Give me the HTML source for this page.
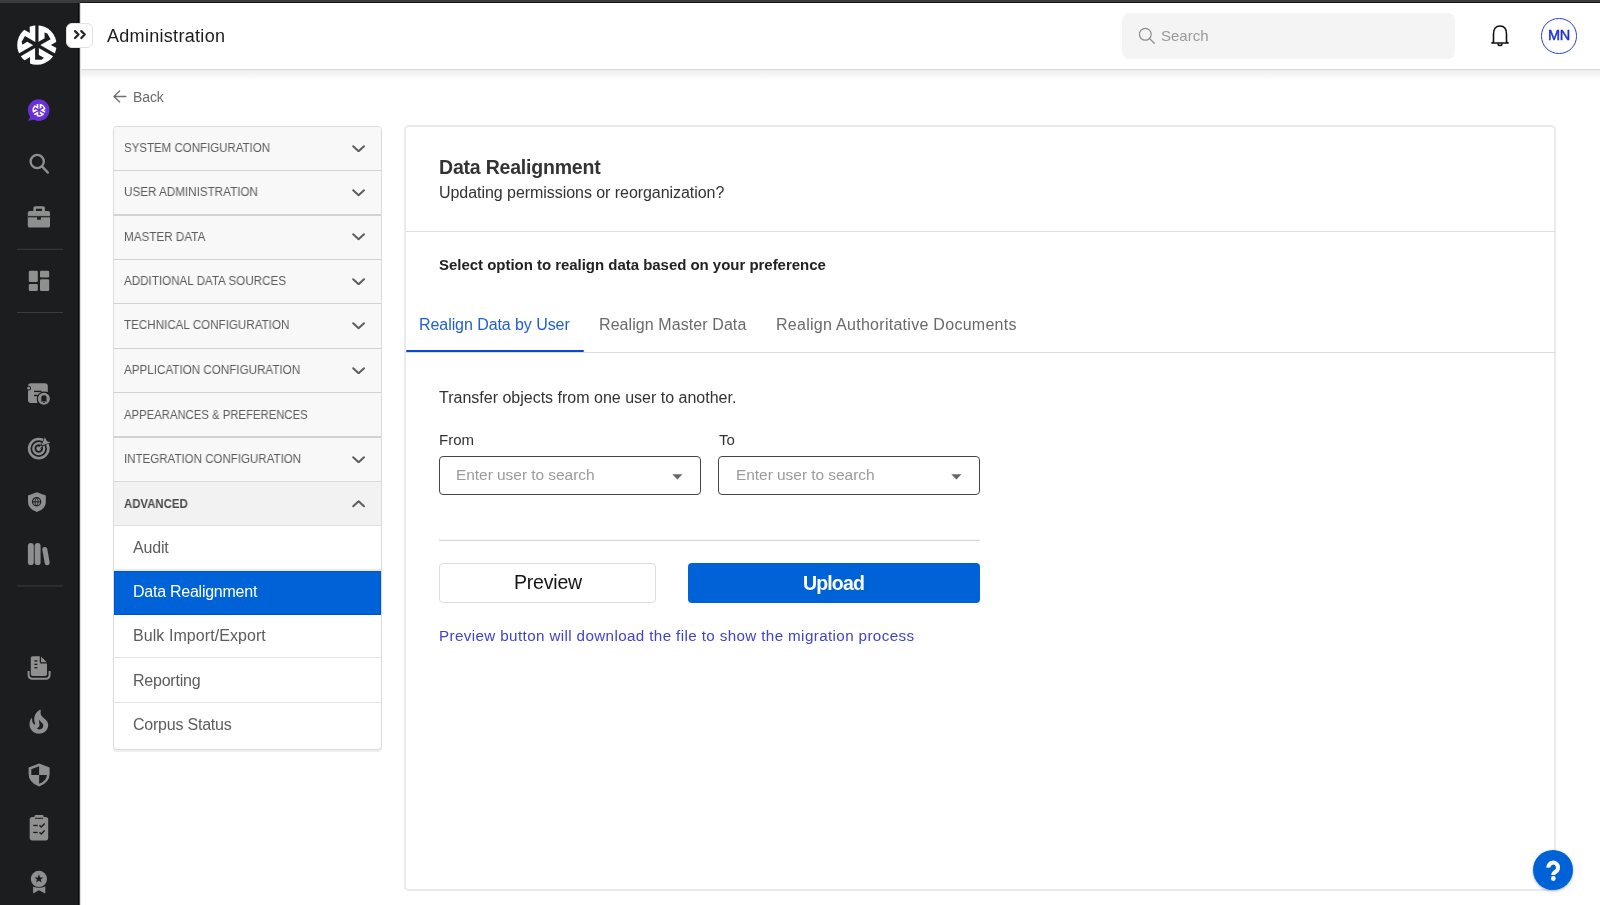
<!DOCTYPE html>
<html><head><meta charset="utf-8">
<style>
*{margin:0;padding:0;box-sizing:border-box}
html,body{width:1600px;height:905px;overflow:hidden;background:#fff;font-family:"Liberation Sans",sans-serif;position:relative}
.a{position:absolute}
.t{position:absolute;white-space:nowrap;line-height:1;will-change:transform}
#topstrip{left:0;top:0;width:1600px;height:3px;background:#3c3c3c}
#topstrip2{left:80px;top:2px;width:1520px;height:1px;background:#161816}
#side{left:0;top:3px;width:80px;height:902px;background:#1c1d1f}
#sideline{left:78px;top:3px;width:1px;height:902px;background:#05080a}
#sideedge{left:79px;top:3px;width:2px;height:902px;background:linear-gradient(to right,#4a4b4c 50%,#dedede 50%)}
#header{left:80px;top:3px;width:1520px;height:67px;background:#fff;border-bottom:1px solid #d9d9d9}
#hshadow{left:80px;top:70px;width:1520px;height:10px;background:linear-gradient(#eeeeee,#fff)}
/* card */
#card{left:404px;top:125px;width:1151.5px;height:766px;border:2px solid #eaeaea;border-radius:5px;background:#fff}
</style></head><body>
<div id="topstrip" class="a"></div>
<div id="side" class="a"></div>
<div id="sideline" class="a"></div>
<div id="topstrip2" class="a"></div>
<div id="header" class="a"></div>
<div id="hshadow" class="a"></div>
<div id="sideedge" class="a"></div>

<!-- header content -->
<div class="t" style="left:107px;top:26.8px;font-size:18px;letter-spacing:0.3px;color:#1b1b1b">Administration</div>
<div class="a" style="left:1122px;top:12.5px;width:333px;height:46.5px;background:#f4f4f4;border-radius:7px"></div>
<svg class="a" style="left:1136px;top:26px" width="22" height="22" viewBox="0 0 22 22"><circle cx="9.3" cy="8.3" r="5.9" fill="none" stroke="#8c8c8c" stroke-width="1.2"/><line x1="13.6" y1="12.6" x2="18.3" y2="17.3" stroke="#8c8c8c" stroke-width="1.3" stroke-linecap="round"/></svg>
<div class="t" style="left:1161px;top:28.3px;font-size:15px;color:#9a9a9a">Search</div>
<svg class="a" style="left:1488px;top:22px" width="24" height="26" viewBox="0 0 24 26"><path d="M5.5 19.8 L5.5 12 C5.5 6.8 8 4 12 4 C16 4 18.5 6.8 18.5 12 L18.5 19.8 C18.5 20.3 19 20.4 19.8 20.8 L20.1 21 L3.9 21 L4.2 20.8 C5 20.4 5.5 20.3 5.5 19.8 Z" fill="none" stroke="#111" stroke-width="1.6" stroke-linejoin="round"/><path d="M10 21.4 C10 24.2 14 24.2 14 21.4" fill="none" stroke="#111" stroke-width="1.5"/></svg>
<div class="a" style="left:1541px;top:18px;width:35.5px;height:35.5px;border:1.6px solid #2a3ce6;border-radius:50%"></div>
<div class="t" style="left:1547.6px;top:28.4px;font-size:14.5px;color:#1b2fd8;letter-spacing:-0.35px;-webkit-text-stroke:0.45px #1b2fd8">MN</div>

<!-- expand button -->
<div class="a" style="left:66px;top:23px;width:26.5px;height:24.5px;background:#fff;border:1px solid #e2e2e2;border-radius:6px"></div>
<svg class="a" style="left:72px;top:28px" width="16" height="14" viewBox="0 0 16 14"><path d="M3.05 3.15 L6.5 6.55 L3.05 9.95 M9.3 3.15 L12.75 6.55 L9.3 9.95" fill="none" stroke="#262626" stroke-width="2.3" stroke-linecap="round" stroke-linejoin="round"/></svg>

<!-- back -->
<svg class="a" style="left:111px;top:88px" width="18" height="17" viewBox="0 0 18 17"><path d="M8.6 2.9 L2.9 8.5 L8.6 14.1 M2.9 8.5 L14.8 8.5" fill="none" stroke="#707070" stroke-width="1.35" stroke-linecap="round" stroke-linejoin="round"/></svg>
<div class="t" style="left:132.8px;top:90.1px;font-size:14px;color:#6b6b6b;letter-spacing:-0.1px">Back</div>

<!-- SIDEBAR_PLACEHOLDER -->
<svg class="a" style="left:0;top:0" width="80" height="905" viewBox="0 0 80 905">
<defs>
<g id="lg">
 <circle cx="0" cy="0" r="19.7" fill="#fff"/>
 <g fill="#1c1d1f">
 <g id="piece">
  <rect x="-1.6" y="-21" width="3.2" height="21"/>
  <path d="M-1.8 0 L1.95 0 L1.95 10.1 L7.0 12.8 L4.8 14.8 L-1.8 14.8 Z"/>
  <path d="M-6.9 12.1 L-6.9 19.2 L-9.8 18.4 L-12.9 15.8 Z"/>
 </g>
 <use href="#piece" transform="rotate(120)"/>
 <use href="#piece" transform="rotate(-120)"/>
 <circle cx="0" cy="0" r="2.6"/>
 </g>
</g>
</defs>
<use href="#lg" transform="translate(36.9 45)"/>
<!-- purple bubble -->
<circle cx="38.7" cy="110.1" r="10.8" fill="#6a2fd6"/>
<path d="M31 115 L28 121 L36 119 Z" fill="#6a2fd6"/>
<g transform="translate(39 110.2) scale(0.33)">
 <circle cx="0" cy="0" r="19.7" fill="#fff"/>
 <g fill="#6a2fd6">
 <g id="piece2">
  <rect x="-2" y="-21" width="4" height="21"/>
  <path d="M-2.2 0 L2.4 0 L2.4 10.1 L7.4 12.8 L5.2 15.2 L-2.2 15.2 Z"/>
  <path d="M-6.9 12.1 L-6.9 19.2 L-9.8 18.4 L-12.9 15.8 Z"/>
 </g>
 <use href="#piece2" transform="rotate(120)"/>
 <use href="#piece2" transform="rotate(-120)"/>
 </g>
</g>
<g fill="#8f8f8f" stroke="none">
<!-- search -->
<circle cx="37.2" cy="161.5" r="6.6" fill="none" stroke="#8f8f8f" stroke-width="2.3"/>
<line x1="42.2" y1="166.6" x2="47.9" y2="172.6" stroke="#8f8f8f" stroke-width="2.3" stroke-linecap="round"/>
<!-- briefcase -->
<path d="M35.2 206.3 L43.1 206.3 Q44.9 206.3 44.9 208.1 L44.9 211.5 L42 211.5 L42 208.8 L35.9 208.8 L35.9 211.5 L33.4 211.5 L33.4 208.1 Q33.4 206.3 35.2 206.3 Z"/>
<rect x="27.8" y="211" width="22.2" height="16.6" rx="1.9"/>
<rect x="27.8" y="215.9" width="22.2" height="1.5" fill="#2f3032"/>
<rect x="37.1" y="217.1" width="3.8" height="2.6" fill="#1c1d1f"/>
<!-- dashboard -->
<rect x="28.8" y="270.7" width="9" height="11.3" rx="1.3"/>
<rect x="28.8" y="283.9" width="9" height="7.1" rx="1.3"/>
<rect x="40" y="270.7" width="9.2" height="6.9" rx="1.3"/>
<rect x="40" y="279.3" width="9.2" height="11.7" rx="1.3"/>
<!-- doc with bell -->
<path d="M31 383.2 L44.8 383.2 Q47.8 383.2 47.8 386.2 L47.8 392 Q43 391 39.5 394.5 Q36.8 398 37.6 403.1 L31 403.1 Q28 403.1 28 400.1 L28 386.2 Q28 383.2 31 383.2 Z"/>
<circle cx="28.6" cy="388.2" r="2.4" fill="#1c1d1f"/>
<circle cx="28.6" cy="388.2" r="1.4" fill="#8f8f8f"/>
<rect x="34" y="390.7" width="7.6" height="1.4" fill="#1c1d1f"/>
<rect x="34" y="394.8" width="4" height="1.4" fill="#1c1d1f"/>
<circle cx="43.9" cy="398.8" r="7.2" fill="#1c1d1f"/>
<circle cx="43.9" cy="398.8" r="6"/>
<path d="M41.3 400.8 L41.3 397.6 Q41.3 395.2 43.9 395.2 Q46.5 395.2 46.5 397.6 L46.5 400.8 L47.2 401.4 L40.6 401.4 Z" fill="#1c1d1f"/>
<rect x="43.1" y="402" width="1.6" height="1" fill="#1c1d1f"/>
<!-- target -->
<circle cx="38.75" cy="448.6" r="9.6" fill="none" stroke="#8f8f8f" stroke-width="2.6"/>
<circle cx="38.75" cy="448.6" r="5.4" fill="none" stroke="#8f8f8f" stroke-width="2.3"/>
<circle cx="38.75" cy="448.6" r="2.4"/>
<line x1="39.5" y1="447.8" x2="46" y2="441.3" stroke="#1c1d1f" stroke-width="3"/>
<line x1="38.75" y1="448.6" x2="44.5" y2="442.8" stroke="#8f8f8f" stroke-width="1.5"/>
<path d="M41.6 445.6 L44.9 437.2 L46.7 441.1 L50.5 442.4 Z" stroke="#1c1d1f" stroke-width="1.2" stroke-linejoin="round"/>
<path d="M41.6 445.6 L44.9 437.2 L46.7 441.1 L50.5 442.4 Z"/>
<!-- shield globe -->
<path d="M36.9 492.2 L45.8 495.6 L45.8 502 Q45.8 509 36.9 512.1 Q28 509 28 502 L28 495.6 Z"/>
<circle cx="36.6" cy="501.8" r="4.7" fill="#1c1d1f"/>
<circle cx="36.6" cy="501.8" r="3.5" fill="#8f8f8f"/>
<ellipse cx="36.6" cy="501.8" rx="1.5" ry="3.6" fill="none" stroke="#1c1d1f" stroke-width="0.9"/>
<rect x="32.4" y="501.3" width="8.4" height="1" fill="#1c1d1f"/>
<!-- library -->
<rect x="27.9" y="542.9" width="5.9" height="22.2" rx="2.95"/>
<rect x="34.7" y="542.9" width="5.9" height="22.2" rx="2.95"/>
<rect x="43.5" y="546.9" width="5" height="18.4" rx="2.5" transform="rotate(-10 46 556.1)"/>
<!-- doc tray -->
<path d="M32.8 656.2 L40.6 656.2 L47 662.6 L47 673.9 Q47 675.9 45 675.9 L32.8 675.9 Q30.8 675.9 30.8 673.9 L30.8 658.2 Q30.8 656.2 32.8 656.2 Z"/>
<path d="M40.4 656 L40.4 662 Q40.4 662.9 41.3 662.9 L47.3 662.9" fill="none" stroke="#1c1d1f" stroke-width="1.3"/>
<path d="M41.6 657.4 L41.6 661.7 L45.9 661.7 Z"/>
<rect x="34.4" y="660.3" width="3" height="1.3" fill="#1c1d1f"/>
<rect x="34.4" y="663.7" width="3" height="1.3" fill="#1c1d1f"/>
<rect x="34.4" y="667.1" width="3" height="1.3" fill="#1c1d1f"/>
<path d="M28.6 671 L28.6 674.7 Q28.6 678.7 32.6 678.7 L45.6 678.7 Q49.6 678.7 49.6 674.7 L49.6 671" fill="none" stroke="#8f8f8f" stroke-width="2"/>
<!-- fire -->
<g transform="translate(24.8 707.9) scale(1.17)"><path d="M19.48,12.35c-1.57-4.08-7.16-4.3-5.81-10.230c0.1-0.44-0.37-0.78-0.75-0.55C9.29,3.71,6.68,8,8.87,13.62c0.18,0.46-0.36,0.89-0.75,0.59c-1.81-1.37-2-3.34-1.84-4.75c0.06-0.52-0.62-0.77-0.91-0.34C4.69,10.16,4,11.84,4,14.37c0.38,5.6,5.11,7.32,6.81,7.54c2.43,0.31,5.06-0.14,6.95-1.87C19.84,18.11,20.6,15.03,19.48,12.35z M10.2,17.38c1.44-0.35,2.18-1.39,2.38-2.31c0.33-1.43-0.96-2.83-0.09-5.09c0.33,1.87,3.27,3.04,3.27,5.08C15.84,17.59,13.1,19.76,10.2,17.38z"/></g>
<!-- shield half -->
<path d="M39.1 763.4 L49.6 767.4 L49.6 774 Q49.6 782.5 39.1 786.6 Q28.6 782.5 28.6 774 L28.6 767.4 Z"/>
<path d="M39.1 766.2 L39.1 775 L31.3 775 L31.3 769.2 Z" fill="#1c1d1f"/>
<path d="M39.1 775 L46.9 775 Q46.5 781 39.1 783.8 Z" fill="#1c1d1f"/>
<!-- clipboard -->
<rect x="29.7" y="817" width="18.5" height="23.4" rx="2.6"/>
<rect x="34.5" y="815.1" width="9" height="3.4" rx="1.2"/>
<rect x="35" y="817.8" width="8" height="1" fill="#1c1d1f"/>
<rect x="33.2" y="824.8" width="4.5" height="1.3" fill="#1c1d1f"/>
<rect x="33.2" y="831.8" width="4.5" height="1.3" fill="#1c1d1f"/>
<path d="M39.5 825.3 L41.2 827 L44.7 823.5 M39.5 832.3 L41.2 834 L44.7 830.5" fill="none" stroke="#1c1d1f" stroke-width="1.4"/>
<!-- award -->
<circle cx="38.9" cy="878.9" r="8.1"/>
<path d="M38.9 874.3 L40.1 877.4 L43.3 877.5 L40.8 879.5 L41.7 882.6 L38.9 880.8 L36.1 882.6 L37 879.5 L34.5 877.5 L37.7 877.4 Z" fill="#1c1d1f"/>
<path d="M33.1 886.5 Q38.9 889 45.3 886.5 L45.3 893.4 L38.9 890.3 L33.1 893.4 Z"/>
</g>
<!-- dividers -->
<rect x="17" y="248.8" width="46" height="1" fill="#3b3c3e"/>
<rect x="17" y="312" width="46" height="1" fill="#3b3c3e"/>
<rect x="17" y="585.4" width="46" height="1" fill="#3b3c3e"/>
</svg>
<!-- SIDEBAR_END -->

<!-- PANEL_PLACEHOLDER -->
<div class="a" style="left:113px;top:125.5px;width:269px;height:624.5px;border:1px solid #dcdcdc;border-radius:4px;background:#fff;box-shadow:0 1.5px 1px rgba(0,0,0,.07)"></div>
<div class="a" style="left:114px;top:126.50px;width:267px;height:44.00px;background:#f8f8f8;border-radius:3px 3px 0 0;"></div>
<div class="a" style="left:114px;top:169.75px;width:267px;height:1.5px;background:#d2d2d2"></div>
<div class="t" style="left:123.6px;top:141.84px;font-size:12px;color:#5c5c5c;transform:scaleX(0.958);transform-origin:0 0;">SYSTEM CONFIGURATION</div>
<svg class="a" style="left:352.1px;top:144.65px" width="13.2" height="7.5" viewBox="0 0 13.2 7.5"><path d="M1.2 1.2 L6.6 6.3 L12 1.2" fill="none" stroke="#5e5e5e" stroke-width="2" stroke-linecap="round" stroke-linejoin="round"/></svg>
<div class="a" style="left:114px;top:171.25px;width:267px;height:43.75px;background:#f8f8f8;"></div>
<div class="a" style="left:114px;top:214.25px;width:267px;height:1.5px;background:#d2d2d2"></div>
<div class="t" style="left:123.6px;top:186.24px;font-size:12px;color:#5c5c5c;transform:scaleX(0.972);transform-origin:0 0;">USER ADMINISTRATION</div>
<svg class="a" style="left:352.1px;top:189.05px" width="13.2" height="7.5" viewBox="0 0 13.2 7.5"><path d="M1.2 1.2 L6.6 6.3 L12 1.2" fill="none" stroke="#5e5e5e" stroke-width="2" stroke-linecap="round" stroke-linejoin="round"/></svg>
<div class="a" style="left:114px;top:215.75px;width:267px;height:43.65px;background:#f8f8f8;"></div>
<div class="a" style="left:114px;top:258.65px;width:267px;height:1.5px;background:#d2d2d2"></div>
<div class="t" style="left:123.6px;top:230.64px;font-size:12px;color:#5c5c5c;transform:scaleX(0.974);transform-origin:0 0;">MASTER DATA</div>
<svg class="a" style="left:352.1px;top:233.45px" width="13.2" height="7.5" viewBox="0 0 13.2 7.5"><path d="M1.2 1.2 L6.6 6.3 L12 1.2" fill="none" stroke="#5e5e5e" stroke-width="2" stroke-linecap="round" stroke-linejoin="round"/></svg>
<div class="a" style="left:114px;top:260.15px;width:267px;height:43.45px;background:#f8f8f8;"></div>
<div class="a" style="left:114px;top:302.85px;width:267px;height:1.5px;background:#d2d2d2"></div>
<div class="t" style="left:123.6px;top:275.04px;font-size:12px;color:#5c5c5c;transform:scaleX(0.969);transform-origin:0 0;">ADDITIONAL DATA SOURCES</div>
<svg class="a" style="left:352.1px;top:277.85px" width="13.2" height="7.5" viewBox="0 0 13.2 7.5"><path d="M1.2 1.2 L6.6 6.3 L12 1.2" fill="none" stroke="#5e5e5e" stroke-width="2" stroke-linecap="round" stroke-linejoin="round"/></svg>
<div class="a" style="left:114px;top:304.35px;width:267px;height:43.95px;background:#f8f8f8;"></div>
<div class="a" style="left:114px;top:347.55px;width:267px;height:1.5px;background:#d2d2d2"></div>
<div class="t" style="left:123.6px;top:319.44px;font-size:12px;color:#5c5c5c;transform:scaleX(0.969);transform-origin:0 0;">TECHNICAL CONFIGURATION</div>
<svg class="a" style="left:352.1px;top:322.25px" width="13.2" height="7.5" viewBox="0 0 13.2 7.5"><path d="M1.2 1.2 L6.6 6.3 L12 1.2" fill="none" stroke="#5e5e5e" stroke-width="2" stroke-linecap="round" stroke-linejoin="round"/></svg>
<div class="a" style="left:114px;top:349.05px;width:267px;height:43.65px;background:#f8f8f8;"></div>
<div class="a" style="left:114px;top:391.95px;width:267px;height:1.5px;background:#d2d2d2"></div>
<div class="t" style="left:123.6px;top:363.84px;font-size:12px;color:#5c5c5c;transform:scaleX(0.97);transform-origin:0 0;">APPLICATION CONFIGURATION</div>
<svg class="a" style="left:352.1px;top:366.65px" width="13.2" height="7.5" viewBox="0 0 13.2 7.5"><path d="M1.2 1.2 L6.6 6.3 L12 1.2" fill="none" stroke="#5e5e5e" stroke-width="2" stroke-linecap="round" stroke-linejoin="round"/></svg>
<div class="a" style="left:114px;top:393.45px;width:267px;height:43.35px;background:#f8f8f8;"></div>
<div class="a" style="left:114px;top:436.05px;width:267px;height:1.5px;background:#d2d2d2"></div>
<div class="t" style="left:123.6px;top:408.74px;font-size:12px;color:#5c5c5c;transform:scaleX(0.943);transform-origin:0 0;">APPEARANCES &amp; PREFERENCES</div>
<div class="a" style="left:114px;top:437.55px;width:267px;height:43.85px;background:#f8f8f8;"></div>
<div class="a" style="left:114px;top:480.65px;width:267px;height:1.5px;background:#d9d9d9"></div>
<div class="t" style="left:123.6px;top:453.14px;font-size:12px;color:#5c5c5c;transform:scaleX(0.961);transform-origin:0 0;">INTEGRATION CONFIGURATION</div>
<svg class="a" style="left:352.1px;top:455.95px" width="13.2" height="7.5" viewBox="0 0 13.2 7.5"><path d="M1.2 1.2 L6.6 6.3 L12 1.2" fill="none" stroke="#5e5e5e" stroke-width="2" stroke-linecap="round" stroke-linejoin="round"/></svg>
<div class="a" style="left:114px;top:482.15px;width:267px;height:43.35px;background:#f2f2f2;"></div>
<div class="a" style="left:114px;top:525.00px;width:267px;height:1px;background:#e0e0e0"></div>
<div class="t" style="left:123.6px;top:497.54px;font-size:12px;color:#5c5c5c;transform:scaleX(0.949);transform-origin:0 0;font-weight:bold;color:#4a4a4a;">ADVANCED</div>
<svg class="a" style="left:352.1px;top:500.35px" width="13.2" height="7.5" viewBox="0 0 13.2 7.5"><path d="M1.2 6.3 L6.6 1.2 L12 6.3" fill="none" stroke="#5e5e5e" stroke-width="2" stroke-linecap="round" stroke-linejoin="round"/></svg>
<div class="a" style="left:114px;top:569px;width:267px;height:2px;background:#ebebeb"></div>
<div class="t" style="left:132.6px;top:539.86px;font-size:16px;color:#5c5c5c;letter-spacing:-0.17px">Audit</div>
<div class="a" style="left:114px;top:571px;width:267px;height:43.5px;background:#0062d7;border:1px solid #0052d0"></div>
<div class="t" style="left:132.6px;top:584.16px;font-size:16px;color:#ffffff;letter-spacing:-0.25px">Data Realignment</div>
<div class="a" style="left:114px;top:657.30px;width:267px;height:1.2px;background:#e3e3e3"></div>
<div class="t" style="left:132.6px;top:628.26px;font-size:16px;color:#5c5c5c;letter-spacing:0.07px">Bulk Import/Export</div>
<div class="a" style="left:114px;top:701.70px;width:267px;height:1.2px;background:#e3e3e3"></div>
<div class="t" style="left:132.6px;top:673.06px;font-size:16px;color:#5c5c5c;letter-spacing:-0.22px">Reporting</div>
<div class="t" style="left:132.6px;top:717.26px;font-size:16px;color:#5c5c5c;letter-spacing:-0.22px">Corpus Status</div>
<!-- PANEL_END -->

<!-- CARD_PLACEHOLDER -->
<div id="card" class="a"></div>
<div class="t" style="left:439px;top:157.7px;font-size:19.5px;font-weight:bold;color:#333;letter-spacing:-0.2px">Data Realignment</div>
<div class="t" style="left:439.2px;top:184.8px;font-size:16px;color:#333;letter-spacing:-0.05px">Updating permissions or reorganization?</div>
<div class="a" style="left:406px;top:231px;width:1149px;height:1.2px;background:#dedede"></div>
<div class="t" style="left:439.3px;top:257.3px;font-size:15px;font-weight:bold;color:#222;letter-spacing:-0.03px">Select option to realign data based on your preference</div>
<!-- tabs -->
<div class="t" style="left:419.3px;top:316.7px;font-size:16px;color:#1f5fd0;letter-spacing:-0.07px">Realign Data by User</div>
<div class="t" style="left:598.6px;top:316.7px;font-size:16px;color:#6a6a6a;letter-spacing:0.08px">Realign Master Data</div>
<div class="t" style="left:775.5px;top:316.7px;font-size:16px;color:#6a6a6a;letter-spacing:0.28px">Realign Authoritative Documents</div>
<div class="a" style="left:406px;top:352px;width:1149px;height:1.2px;background:#dcdcdc"></div>
<div class="a" style="left:405.5px;top:350px;width:178.3px;height:2.2px;background:#0a48d2;border-radius:1px"></div>
<!-- form -->
<div class="t" style="left:439.3px;top:390px;font-size:16px;color:#333;letter-spacing:0px">Transfer objects from one user to another.</div>
<div class="t" style="left:439.3px;top:431.9px;font-size:15px;color:#333">From</div>
<div class="t" style="left:718.8px;top:431.9px;font-size:15px;color:#333">To</div>
<div class="a" style="left:438.8px;top:456.3px;width:262px;height:38.5px;border:1.6px solid #454545;border-radius:4px"></div>
<div class="a" style="left:718.3px;top:456.3px;width:262px;height:38.5px;border:1.6px solid #454545;border-radius:4px"></div>
<div class="t" style="left:456.3px;top:467.4px;font-size:15.5px;color:#9b9b9b;letter-spacing:-0.05px">Enter user to search</div>
<div class="t" style="left:735.6px;top:467.4px;font-size:15.5px;color:#9b9b9b;letter-spacing:-0.05px">Enter user to search</div>
<svg class="a" style="left:671.5px;top:473.5px" width="11" height="6" viewBox="0 0 11 6"><path d="M0.3 0.3 L10.5 0.3 L5.4 5.6 Z" fill="#666"/></svg>
<svg class="a" style="left:951px;top:473.5px" width="11" height="6" viewBox="0 0 11 6"><path d="M0.3 0.3 L10.5 0.3 L5.4 5.6 Z" fill="#666"/></svg>
<div class="a" style="left:439px;top:540px;width:541px;height:1px;background:#d9d9d9"></div><div class="a" style="left:439px;top:539px;width:541px;height:1px;background:#f3f3f3"></div>
<div class="a" style="left:439px;top:563.3px;width:216.5px;height:39.5px;border:1.2px solid #dcdcdc;border-radius:4px;background:#fff"></div>
<div class="t" style="left:513.6px;top:572.9px;font-size:19.5px;color:#141414;letter-spacing:-0.2px">Preview</div>
<div class="a" style="left:687.5px;top:563px;width:292.5px;height:39.7px;background:#0062d7;border-radius:4px"></div>
<div class="t" style="left:802.8px;top:573.6px;font-size:19.5px;font-weight:bold;color:#fff;letter-spacing:-0.85px">Upload</div>
<div class="t" style="left:439.4px;top:627.8px;font-size:15.2px;color:#4143cc;letter-spacing:0.38px">Preview button will download the file to show the migration process</div>
<!-- help -->
<div class="a" style="left:1533px;top:849.5px;width:40px;height:40px;border-radius:50%;background:#0062d7;box-shadow:0 1px 3px rgba(0,0,0,.3)"></div>
<svg class="a" style="left:1533px;top:849.5px" width="40" height="40" viewBox="0 0 40 40"><path d="M15.3 17.6 A4.9 4.9 0 1 1 22.7 21.7 Q20.3 23.1 20.3 24.9" fill="none" stroke="#fff" stroke-width="4.1"/><circle cx="20.3" cy="28.5" r="2.4" fill="#fff"/></svg>
<!-- CARD_END -->

</body></html>
